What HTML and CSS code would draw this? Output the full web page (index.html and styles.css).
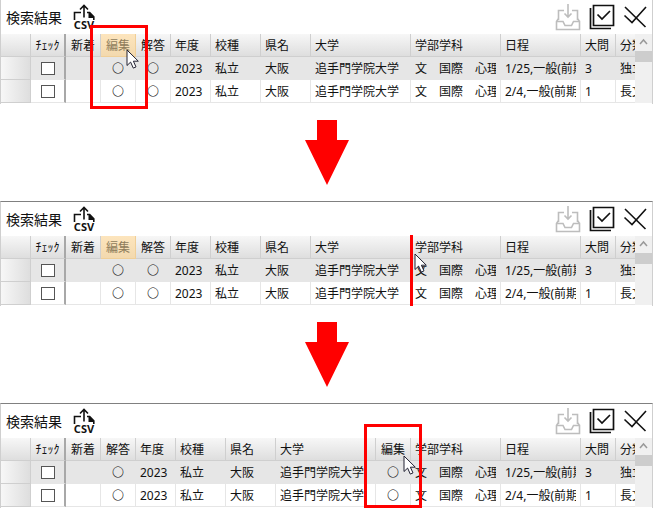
FILE: index.html
```html
<!DOCTYPE html>
<html lang="ja">
<head>
    <meta charset="UTF-8">
    <meta name="viewport" content="width=device-width, initial-scale=1.0">
    <title>検索結果</title>
    <link rel="stylesheet" href="styles.css">
</head>
<body>

<!-- Shared icons -->
<svg class="sprite" aria-hidden="true">
    <symbol id="icon-share" viewBox="0 0 22 16">
        <path d="M8 8.500H1.500V16M11 13.500V1.500M7 5.500l4-4 4 4" fill="none" stroke="#111" stroke-width="1.600"/>
        <path d="M14 7.700h3l4.600 4.800V16h-1.600v-2h-4.500V9.300H14z" fill="#111"/>
    </symbol>
    <symbol id="icon-inbox" viewBox="0 0 26 28">
        <path d="M9 7.500H3.500V17M17 7.500h5.500V17M1.500 18.500h6.500l2 4h6.500l2-4H24.500V26.500h-23V18.500l2-3M24.500 18.500l-2-3M13 1v13M9.500 10.500l3.500 3.500 3.500-3.500" fill="none" stroke="#bdbdbd" stroke-width="1.600"/>
    </symbol>
    <symbol id="icon-check-all" viewBox="0 0 26 26">
        <path d="M4.500 1.500h20v20h-20zM1.500 4v20.500H22M8.500 10.500l4.500 4.500 8-8" fill="none" stroke="#111" stroke-width="1.700"/>
    </symbol>
    <symbol id="icon-uncheck" viewBox="0 0 24 22">
        <path d="M1.500 9.500l7.500 7L23 1M2 1l20.500 20" fill="none" stroke="#111" stroke-width="1.600"/>
    </symbol>
    <symbol id="icon-cursor" viewBox="0 0 13 20">
        <path d="M1 1v15.500l3.600-3.400 2.700 6 2.700-1.200-2.600-5.700H12.300z" fill="#fff" stroke="#223" stroke-width="1"/>
    </symbol>
    <symbol id="icon-arrow" viewBox="0 0 44 65">
        <path d="M12 0h20v20h12L22 65 0 20h12z" fill="#f00"/>
    </symbol>
</svg>

<main id="steps"></main>

<script src="script.js"></script>
</body>
</html>
```
FILE: styles.css
```css
:root {
    --line: #cfcfcf;
    --cell-line: #e6e6e6;
    --mark: #ff0000;
    --text: #111;
}

* {
    margin: 0;
    padding: 0;
    box-sizing: border-box;
}

body {
    font-family: 'Noto Sans', 'Noto Sans CJK JP', sans-serif;
    font-size: 12px;
    color: var(--text);
    background: #fff;
}

.sprite {
    position: absolute;
    width: 0;
    height: 0;
}

.panel {
    position: relative;
    border-left: 1px solid var(--line);
    border-right: 1px solid var(--line);
}

.step ~ .step .panel {
    border-top: 1px solid #808080;
}

/* Title bar */
.toolbar {
    display: flex;
    align-items: center;
    height: 34px;
    padding: 0 5px;
}

.toolbar h2 {
    font-size: 14px;
    font-weight: 400;
}

.toolbar button {
    border: none;
    background: none;
    color: #111;
}

.toolbar svg {
    display: block;
}

.toolbar .csv {
    display: flex;
    flex-direction: column;
    align-items: center;
    margin-left: 11px;
    font-family: 'Noto Sans', sans-serif;
    font-size: 11px;
    font-weight: 700;
    line-height: 10px;
}

.csv svg {
    width: 22px;
    height: 16px;
}

.tools {
    display: flex;
    align-items: center;
    gap: 8px;
    margin-left: auto;
}

/* Result table */
.results {
    display: flex;
    padding-bottom: 1px;
}

.scroll {
    flex: 1;
    min-width: 0;
    overflow: hidden;
}

table {
    width: 663px;
    table-layout: fixed;
    border-collapse: separate;
    border-spacing: 0;
}

th,
td {
    height: 23px;
    padding: 2px 4px 0;
    white-space: nowrap;
    font-weight: 400;
    text-align: left;
    line-height: 20px;
    border-right: 1px solid var(--cell-line);
    border-bottom: 1px solid var(--cell-line);
}

th {
    background: linear-gradient(#f7f7f7, #dedede);
    border-color: var(--line);
}

td span {
    display: block;
    overflow: hidden;
}

tbody tr:first-child td {
    background: #e6e6e6;
}

tbody tr .stub,
tbody tr:first-child .stub {
    background: linear-gradient(90deg, #f7f7f7, #dedede);
    border-color: var(--line);
}

.center {
    padding: 2px 0 0;
    text-align: center;
}

td.center {
    font-weight: 300;
}

.fixed {
    border-right: 2px solid #a8a8a8;
}

td.fixed {
    padding: 0;
}

th.dragged {
    color: #8f7d5c;
    background: linear-gradient(#fde5bd, #f3d9ae);
    border-color: #f0cf98;
}

input {
    display: block;
    appearance: none;
    width: 14px;
    height: 13px;
    margin: 0 auto;
    background: #fff;
    border: 1px solid #555;
}

.scrollbar {
    width: 17px;
    background: #f0f0f0;
}

.scrollbar svg {
    display: block;
    width: 17px;
    height: 17px;
}

.thumb {
    height: 11px;
    background: #cdcdcd;
}

/* Drag marks over the table */
.frame,
.drop-line,
.cursor {
    position: absolute;
}

.frame {
    top: 25px;
    width: 58px;
    height: 84px;
    border: 3px solid var(--mark);
}

.frame.from {
    left: 89px;
}

.frame.to {
    top: 20px;
    left: 363px;
}

.drop-line {
    top: 33px;
    left: 409px;
    width: 3px;
    height: 71px;
    background: var(--mark);
}

.cursor {
    top: 51px;
    width: 13px;
    height: 20px;
}

.cursor.from {
    top: 49px;
    left: 125px;
}

.cursor.between {
    left: 413px;
}

.cursor.to {
    left: 402px;
}

.next {
    display: block;
    width: 44px;
    height: 65px;
    margin: 16px auto;
}
```
FILE: script.js
```js
const columns = {
    isNew: { label: '新着', width: 35, center: true },
    edit: { label: '編集', width: 35, center: true },
    answer: { label: '解答', width: 35, center: true },
    year: { label: '年度', width: 40 },
    type: { label: '校種', width: 50 },
    pref: { label: '県名', width: 50 },
    univ: { label: '大学', width: 100 },
    dept: { label: '学部学科', width: 90 },
    date: { label: '日程', width: 80 },
    question: { label: '大問', width: 35 },
    category: { label: '分類', width: 48 }
};

const rows = [
    { isNew: '', edit: '〇', answer: '〇', year: '2023', type: '私立', pref: '大阪', univ: '追手門学院大学', dept: '文　国際　心理', date: '1/25,一般(前期', question: '3', category: '独立' },
    { isNew: '', edit: '〇', answer: '〇', year: '2023', type: '私立', pref: '大阪', univ: '追手門学院大学', dept: '文　国際　心理', date: '2/4,一般(前期', question: '1', category: '長文' }
];

const before = Object.keys(columns);
const after = ['isNew', 'answer', 'year', 'type', 'pref', 'univ', 'edit', 'dept', 'date', 'question', 'category'];

const steps = [
    { order: before, dragging: true, marks: '<div class="frame from"></div><svg class="cursor from"><use href="#icon-cursor"/></svg>' },
    { order: before, dragging: true, marks: '<div class="drop-line"></div><svg class="cursor between"><use href="#icon-cursor"/></svg>' },
    { order: after, dragging: false, marks: '<div class="frame to"></div><svg class="cursor to"><use href="#icon-cursor"/></svg>' }
];

function panel(step) {
    const cls = (key) => columns[key].center ? 'center' : '';
    const drag = (key) => step.dragging && key === 'edit' ? ' dragged' : '';
    const cols = step.order.map((key) => `<col style="width:${columns[key].width}px">`).join('');
    const head = step.order.map((key) => `<th class="${cls(key)}${drag(key)}">${columns[key].label}</th>`).join('');
    const body = rows.map((row) => `
        <tr>
            <td class="stub"></td>
            <td class="fixed center"><input type="checkbox" aria-label="チェック"></td>
            ${step.order.map((key) => `<td class="${cls(key)}"><span>${row[key]}</span></td>`).join('')}
        </tr>`).join('');

    return `
        <div class="panel">
            <div class="toolbar">
                <h2>検索結果</h2>
                <button class="csv"><svg><use href="#icon-share"/></svg>CSV</button>
                <div class="tools">
                    <button aria-label="取込"><svg width="26" height="28"><use href="#icon-inbox"/></svg></button>
                    <button aria-label="全選択"><svg width="26" height="26"><use href="#icon-check-all"/></svg></button>
                    <button aria-label="全解除"><svg width="24" height="22"><use href="#icon-uncheck"/></svg></button>
                </div>
            </div>
            <div class="results">
                <div class="scroll">
                    <table>
                        <colgroup><col style="width:30px"><col style="width:35px">${cols}</colgroup>
                        <thead><tr><th></th><th class="fixed center">ﾁｪｯｸ</th>${head}</tr></thead>
                        <tbody>${body}</tbody>
                    </table>
                </div>
                <div class="scrollbar">
                    <svg viewBox="0 0 17 17"><path d="M5 10l3.500-4 3.500 4" fill="none" stroke="#999" stroke-width="1.500"/></svg>
                    <div class="thumb"></div>
                </div>
            </div>
            ${step.marks}
        </div>`;
}

const arrow = '<svg class="next"><use href="#icon-arrow"/></svg>';
document.getElementById('steps').innerHTML = steps
    .map((step) => `<section class="step">${panel(step)}</section>`)
    .join(arrow);
```
